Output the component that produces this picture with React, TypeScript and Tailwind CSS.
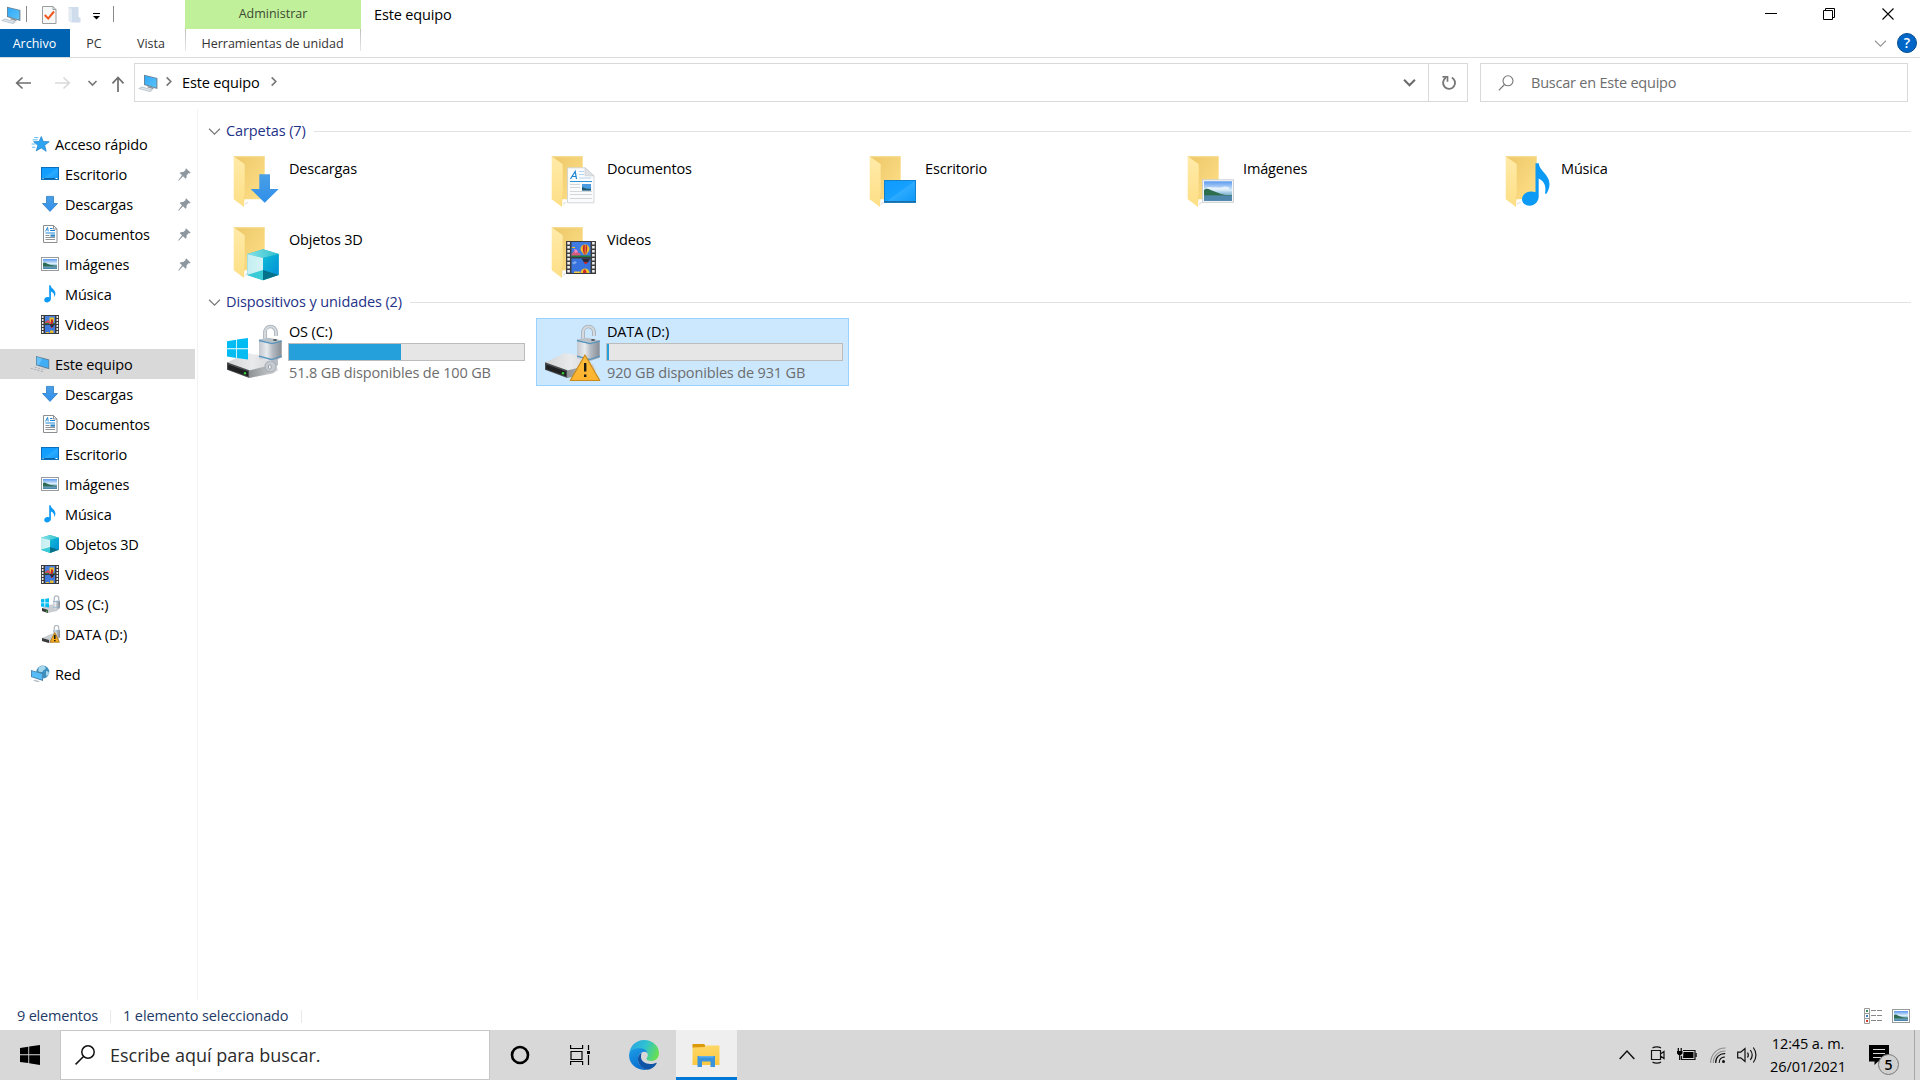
import React from "react";

type IconProps = { className?: string };

const Defs = () => (
  <svg width="0" height="0" className="absolute">
    <defs>
      <linearGradient id="screen" x1="0" y1="0" x2="1" y2="1">
        <stop offset="0" stopColor="#2fa9fb" />
        <stop offset="1" stopColor="#5cc3f7" />
      </linearGradient>
      <linearGradient id="desk" x1="0" y1="0" x2="1" y2="1">
        <stop offset="0" stopColor="#0c9bff" />
        <stop offset="0.5" stopColor="#16a0ff" />
        <stop offset="0.52" stopColor="#2cabff" />
        <stop offset="1" stopColor="#0a97f9" />
      </linearGradient>
      <linearGradient id="folderBack" x1="0" y1="0" x2="1" y2="1">
        <stop offset="0" stopColor="#ecc767" />
        <stop offset="1" stopColor="#ffe08a" />
      </linearGradient>
      <linearGradient id="folderFront" x1="0" y1="0" x2="0" y2="1">
        <stop offset="0" stopColor="#ffeaa8" />
        <stop offset="1" stopColor="#fddf86" />
      </linearGradient>
      <linearGradient id="arrow" x1="0" y1="0" x2="0" y2="1">
        <stop offset="0" stopColor="#4a9fe6" />
        <stop offset="1" stopColor="#2f8fea" />
      </linearGradient>
      <linearGradient id="sky" x1="0" y1="0" x2="0" y2="1">
        <stop offset="0" stopColor="#5a98ee" />
        <stop offset="0.45" stopColor="#d9ecfb" />
        <stop offset="0.6" stopColor="#9cc6df" />
        <stop offset="1" stopColor="#3f7ea6" />
      </linearGradient>
      <linearGradient id="cubeLeft" x1="0" y1="0" x2="1" y2="0">
        <stop offset="0" stopColor="#c3eef2" />
        <stop offset="1" stopColor="#d6f4f5" />
      </linearGradient>
      <linearGradient id="cubeRight" x1="0" y1="0" x2="1" y2="1">
        <stop offset="0" stopColor="#12bcd6" />
        <stop offset="1" stopColor="#0090d8" />
      </linearGradient>
      <linearGradient id="cubeTop" x1="0" y1="0" x2="1" y2="0">
        <stop offset="0" stopColor="#86e3e8" />
        <stop offset="1" stopColor="#2fbfcd" />
      </linearGradient>
      <linearGradient id="metal" x1="0" y1="0" x2="1" y2="0">
        <stop offset="0" stopColor="#c3c8cf" />
        <stop offset="0.35" stopColor="#e8ebee" />
        <stop offset="0.6" stopColor="#b4bac2" />
        <stop offset="1" stopColor="#878d95" />
      </linearGradient>
      <linearGradient id="driveTop" x1="0" y1="0" x2="1" y2="0">
        <stop offset="0" stopColor="#d2d4d6" />
        <stop offset="0.5" stopColor="#e9eaec" />
        <stop offset="1" stopColor="#cfd1d4" />
      </linearGradient>
      <linearGradient id="driveSide" x1="0" y1="0" x2="1" y2="0">
        <stop offset="0" stopColor="#8f9295" />
        <stop offset="1" stopColor="#d5d7d9" />
      </linearGradient>
      <linearGradient id="warn" x1="0" y1="0" x2="0" y2="1">
        <stop offset="0" stopColor="#fbbd3c" />
        <stop offset="1" stopColor="#fdb32f" />
      </linearGradient>
      <linearGradient id="edgeTop" x1="0" y1="0.3" x2="1" y2="0.6">
        <stop offset="0" stopColor="#2aa5e4" />
        <stop offset="0.5" stopColor="#2fc3d0" />
        <stop offset="1" stopColor="#6be04c" />
      </linearGradient>
      <linearGradient id="edgeLeft" x1="0" y1="0" x2="0.4" y2="1">
        <stop offset="0" stopColor="#1c9de6" />
        <stop offset="1" stopColor="#0a6fd0" />
      </linearGradient>
      <linearGradient id="taskFolder" x1="0" y1="0" x2="0" y2="1">
        <stop offset="0" stopColor="#ffd766" />
        <stop offset="1" stopColor="#fdc840" />
      </linearGradient>
    </defs>
  </svg>
);

const PcIcon = ({ className }: IconProps) => (
  <svg width="20" height="18" viewBox="0 0 20 18" className={className}>
    <path d="M6 .8 19.4 4v11L6 11z" fill="#6d7f8c" />
    <path d="M6.8 1.7 18.4 4.500v9.200L6.800 10.300z" fill="url(#screen)" />
    <path d="M9.500 12l6 1.600v1.600l-6-1.600z" fill="#8d989f" />
    <path d="M0 14.700 3.800 12.600l11.400 3.200-3.200 2.200z" fill="#b9c4cc" />
    <path d="M1.800 14.600l2.200-1.100 9.200 2.500-1.500 1.100z" fill="#dfe6eb" />
  </svg>
);

const SidePcIcon = () => (
  <svg width="20" height="18" viewBox="0 0 20 18">
    <path d="M6 1 19.2 4.6v9.6L6 10.3z" fill="#5d7d96" />
    <path d="M6.8 2 18.4 5.2v7.7L6.8 9.5z" fill="#40adf5" />
    <path d="M6.8 2 12 3.5l-3 6.6-2.2-.6z" fill="#69c2fa" />
    <path d="M.5 13.2l13 3.6M4.5 12l8 2.4 3-.6" stroke="#aab2b8" strokeWidth="1" fill="none" strokeDasharray="2.5 1" />
  </svg>
);

const StarIcon = () => (
  <svg width="19" height="18" viewBox="0 0 19 18">
    <path
      d="M10.3 1.5l2 5 5.9.2-4.5 3.6 1.5 6-5-3.4-5 3 1.7-5.6L2.6 6.7l5.5-.2z"
      fill="#2ea3f2"
      stroke="#1c82c9"
      strokeWidth=".7"
    />
    <path d="M3.3 2.6h4M1.6 4.8h5M.6 9h4M1 12.2h3.4" stroke="#5fbdf5" strokeWidth="1" />
  </svg>
);

const DesktopIcon = () => (
  <svg width="18" height="18" viewBox="0 0 18 18">
    <rect x=".5" y="2.5" width="17" height="12" fill="url(#desk)" stroke="#0a6fbd" />
    <path d="M1 13.5h16" stroke="#0b62a6" />
    <path d="M1.5 13.5h1M14.5 13.5h2" stroke="#fff" />
  </svg>
);

const DownIcon = () => (
  <svg width="18" height="18" viewBox="0 0 18 18">
    <path d="M5.5 1.4h7v7.1h4L9 16.4 1.5 8.5h4z" fill="url(#arrow)" stroke="#2b7cc4" strokeWidth=".8" />
  </svg>
);

const DocIcon = () => (
  <svg width="18" height="18" viewBox="0 0 18 18">
    <path d="M2.5.5h10l3.5 3.5v13.5H2.5z" fill="#fff" stroke="#8b8f92" />
    <path d="M12.5.5V4H16" fill="none" stroke="#8b8f92" />
    <path d="M4.5 6.4 6.6 2.4l.6 4M9 3.5h2.5M9 5.5h5" stroke="#1d86d8" fill="none" />
    <path d="M4.5 8h9.5" stroke="#1d86d8" />
    <path d="M4.5 10.5h4M4.5 12.5h9.5M4.5 14.5h9.5" stroke="#8f9498" />
    <rect x="9.5" y="9.5" width="4.5" height="2.2" fill="#2f86c4" />
  </svg>
);

const PictureIcon = () => (
  <svg width="18" height="18" viewBox="0 0 18 18">
    <rect x=".5" y="2.5" width="17" height="13" fill="#fff" stroke="#989b9e" />
    <rect x="2" y="4" width="14" height="10" fill="url(#sky)" />
    <path d="M2 8.2c2-1.5 3 .2 4.500.6s2.500 1.500 9.500 2v.8H2z" fill="#2d6b54" />
  </svg>
);

const MusicIcon = () => (
  <svg width="18" height="18" viewBox="0 0 18 18">
    <path
      d="M8.200.3h1.400c.3 3.400 4.800 4.100 4.800 8.200 0 1.500-.5 2.600-1.200 3.700.3-2.600-.3-4.600-3.300-5.800v7.700c0 1.900-1.700 3.300-3.700 3.300-1.800 0-3-.9-3-2.300 0-1.700 1.700-3 3.500-3 .6 0 1.100.1 1.500.3z"
      fill="#0c9af5"
    />
  </svg>
);

const FilmArt = () => (
  <>
    <rect width="30" height="33" fill="#3c3c3e" />
    <rect x="5.500" y="1" width="19" height="15" fill="#3f7be0" />
    <path d="M5.500 13l3-3 3 1 3 2v2h-9z" fill="#d65a7e" />
    <path d="M8 8l3 1 1 2-3 1z" fill="#f28ac0" />
    <path d="M5.500 14.500h19V16h-19z" fill="#1f7a3d" />
    <path d="M14.500 8a4.500 4.500 0 0 1 9 0c0 2-2 3.500-3 5.500h-3c-1-2-3-3.500-3-5.500z" fill="#f0c32c" />
    <path d="M17 4.500c-.6 3 0 6 1 9h.8V3.800zM21 4.500c.6 3 0 6-1 9h-.5V3.800z" fill="#c8262c" />
    <path d="M6 6h3v1H6z" fill="#f0c32c" />
    <rect x="5.500" y="17.500" width="19" height="14.500" fill="#3873dd" />
    <path d="M15.500 17.500h9l-2.500 4h-4z" fill="#2e2b36" />
    <path d="M18 21h3.500l-.8 2h-2z" fill="#c8262c" />
    <path d="M6 22l3-2 2 1.500-3 2z" fill="#7fa9ee" />
    <path d="M14.500 32c0-6 9-6 9 0z" fill="#f0c32c" />
    <path d="M17 32c0-5 3-5 3.500 0z" fill="#c8262c" />
    <path d="M8 32v-1.500h6V32z" fill="#efc644" />
    <path d="M2.600 1v32M27.400 1v32" stroke="#f1f1f1" strokeWidth="2.600" strokeDasharray="2.400 1.600" />
  </>
);

const VideoIcon = () => (
  <svg width="18" height="19" viewBox="0 0 18 19">
    <rect width="18" height="19" fill="#3a3a3c" />
    <rect x="4" y="1" width="10" height="8" fill="#4a82dd" />
    <path d="M4 7l3-2 3 2v2H4z" fill="#cf4d63" />
    <path d="M8.500 2.500h4.500v3.500l-1 1.500H9.500l-1-1.500z" fill="#edbf2c" />
    <path d="M10 4.500h2V9h-2z" fill="#c22d2a" />
    <path d="M4 8h4v1H4zM12 8h2v1h-2z" fill="#2c7d3c" />
    <rect x="4" y="10" width="10" height="8" fill="#3f78dc" />
    <path d="M9 10h4l-1 2h-2z" fill="#2e2b36" />
    <path d="M10 12h1.500v1H10z" fill="#c8262c" />
    <path d="M9 15.500h3.500V18H9zM5 17h3v1H5z" fill="#e9bd31" />
    <path d="M1.700 1v18M16.300 1v18" stroke="#ececec" strokeWidth="1.600" strokeDasharray="2 1" />
  </svg>
);

const CubeArt = () => (
  <>
    <path d="M0 4.700 15.700 0l15.700 4.700v21L15.700 31 0 25.700z" fill="#27b7c8" />
    <path d="M0 4.700 15.700 0l15.700 4.700-15.700 4z" fill="url(#cubeTop)" />
    <path d="M0 4.700l15.700 4v13.600L0 25.700z" fill="url(#cubeLeft)" />
    <path d="M31.400 4.700l-15.700 4v13.600l15.700 3.400z" fill="url(#cubeRight)" />
    <path d="M0 25.700l15.700-5V31z" fill="#3bcbd6" />
    <path d="M31.400 25.700l-15.700-5V31z" fill="#03718a" />
  </>
);

const CubeIcon = () => (
  <svg width="18" height="18" viewBox="0 0 31.4 31">
    <CubeArt />
  </svg>
);

const DriveArt = () => (
  <>
    <path d="M2 42.500 22 33l22 4 9 13-5 3.500-23.500 4.500z" fill="url(#driveTop)" />
    <path d="M24.300 50.500 50 44l3 6-5 3-23.700 5z" fill="url(#driveSide)" />
    <path d="M2 42.300l22.300 8V58L2 49.800z" fill="#4a4d50" />
    <path d="M3.200 44.500l19.800 7v4.800L3.200 49.200z" fill="#1e2021" />
    <circle cx="20" cy="53.300" r="1.200" fill="#35d23a" />
  </>
);

const LockArt = () => (
  <>
    <path d="M40 20v-7.500a5.500 6 0 0 1 11 0V16" fill="none" stroke="#a4abb3" strokeWidth="3.600" />
    <path d="M40 20v-7.500a5.500 6 0 0 1 11 0V16" fill="none" stroke="#d5dade" strokeWidth="2" />
    <path d="M34 19.500l9-1.700 13.700 2.700v17L46 41.500l-12-3z" fill="url(#metal)" />
    <path d="M34 19.500l9-1.700 13.700 2.700L47 23z" fill="#b9c1c9" />
    <ellipse cx="50" cy="20" rx="2" ry="1" fill="#4e545a" />
    <path d="M34 20.500l13 3.200 9.700-2.500M34 36.200l12.500 3.300L56.700 36" fill="none" stroke="#5794bd" strokeWidth="1.300" />
  </>
);

const WinLogo = () => (
  <path
    d="M2 21.200l9.200-1.500v8.600H2zM12 19.500 23 18v10.300H12zM2 29.200h9.200V38L2 36.500zM12 29.200h11V39.500l-11-1.600z"
    fill="#00bcf2"
  />
);

const KeyArt = () => (
  <>
    <path d="M46 39h7v6l-5 3z" fill="#b8bec4" />
    <circle cx="45.500" cy="46.500" r="5.500" fill="#c5cad0" stroke="#989fa7" strokeWidth=".8" />
    <ellipse cx="44.800" cy="47" rx="1.400" ry="2.200" fill="#f3f5f6" stroke="#8b929a" strokeWidth=".8" />
  </>
);

const WarnArt = () => (
  <>
    <path d="M42 35 56.800 60.500H27.300z" fill="url(#warn)" stroke="#c98a1b" strokeWidth="1.200" strokeLinejoin="round" />
    <path d="M42.200 43v8.500M42.200 54.500V57" stroke="#1d1a12" strokeWidth="2.400" />
  </>
);

const DriveIcon = ({ kind, className }: IconProps & { kind: "os" | "data" }) => (
  <svg width="60" height="64" viewBox="0 0 60 64" className={className}>
    <DriveArt />
    {kind === "os" && <WinLogo />}
    {kind === "os" && <KeyArt />}
    <LockArt />
    {kind === "data" && <WarnArt />}
  </svg>
);

const SmallOsIcon = () => (
  <svg width="20" height="18" viewBox="0 0 20 18">
    <path d="M2 13l6-3 9-1 3 4-3 3-9 2-6-2z" fill="#c9ccd0" />
    <path d="M2 13l6 2v3l-6-2z" fill="#37393b" />
    <path d="M6 15.800h1.500v1H6z" fill="#3bdc3f" />
    <path d="M14.300 6V3a2.200 2.200 0 0 1 4.400 0v2" fill="none" stroke="#b3bac0" strokeWidth="1.300" />
    <path d="M13 5.500h7v7.500l-3 1-4-1z" fill="url(#metal)" />
    <path d="M13 6.500h7M13 12.300h7" stroke="#8ab0c9" strokeWidth=".8" />
    <path d="M1 4.300l3.400-.5v3.700H1zM5.300 3.700 9 3.200v4.300H5.300zM1 8.300h3.400V12L1 11.500zM5.300 8.300H9v4.200l-3.700-.5z" fill="#00bcf2" />
  </svg>
);

const SmallDataIcon = () => (
  <svg width="20" height="18" viewBox="0 0 20 18">
    <path d="M2 13l9-4 8-1v8l-10 2-7-2z" fill="#c9ccd0" />
    <path d="M2 13l7 2v3l-7-2z" fill="#37393b" />
    <path d="M14.300 5V2.600a2.200 2.200 0 0 1 4.400 0v2" fill="none" stroke="#b3bac0" strokeWidth="1.300" />
    <path d="M13 4.800h7v8h-7z" fill="url(#metal)" />
    <path d="M13 6h7" stroke="#8ab0c9" strokeWidth=".8" />
    <path d="M14.800 7.500 19.400 17.200H10z" fill="#f9ac1d" stroke="#a86f10" strokeWidth=".8" strokeLinejoin="round" />
    <path d="M14.800 10v4M14.800 15v1.300" stroke="#1d1a12" strokeWidth="1.600" />
  </svg>
);

const NetworkIcon = () => (
  <svg width="20" height="18" viewBox="0 0 20 18">
    <circle cx="12.800" cy="7" r="6.500" fill="#3d8fbe" />
    <path d="M8.500 3c2-2.500 6-2.500 7-.5s-2 2-2.500 3.500-3 1-4.500.5zM16 6c2 0 3 1 3 2.500s-2 3-3 2z" fill="#a7d8ee" />
    <path d="M1 5l12 3.500V16L1 12z" fill="#4a7ea3" />
    <path d="M1.800 6l10.400 3.100v5.700L1.800 11.400z" fill="#55bcf8" />
    <path d="M5 14.700l5 1.600-2 1-5-1.600z" fill="#b9c3ca" />
  </svg>
);

const PinIcon = () => (
  <svg width="13" height="13" viewBox="0 0 13 13" className="mr-[4px]">
    <path d="M8 .3 12.700 4.800l-1.300.6-.7-.3-2.200 2.300c.3 1.400 0 2.500-.9 3.400L5 8.200.8 12.700.2 12.300 4 7.200 1.600 5c1-1 2.300-1.200 3.600-.9L7.700 2 7.400 1.200z" fill="#8d979f" />
  </svg>
);

const Chevron = ({ size = 12, color = "#666", width = 1.3, dir = "down" }: { size?: number; color?: string; width?: number; dir?: "down" | "right" | "up" }) => {
  const d = { down: "M1 3.500 6 8.500 11 3.500", right: "M4 1.500 8.500 6 4 10.500", up: "M.5 9 6 3 11.500 9" }[dir];
  return (
    <svg width={size} height={size} viewBox="0 0 12 12" className="shrink-0">
      <path d={d} fill="none" stroke={color} strokeWidth={width} />
    </svg>
  );
};

const FolderIcon = ({ children }: { children: React.ReactNode }) => (
  <svg width="60" height="62" viewBox="0 0 60 62" className="shrink-0">
    <path d="M19 56l5-4h-3z" fill="#e6e6e6" />
    <path d="M8.700 6.300h31v43h-21z" fill="url(#folderBack)" />
    <path d="M8.700 6.300h31v1h-30z" fill="#f7dd93" />
    <path d="M8.700 6.300l11 8v28l-.7 14.700-10.300-7.700z" fill="url(#folderFront)" />
    <path d="M19.700 41v8.300H19l-.300 7.500z" fill="#f0ce73" />
    {children}
  </svg>
);

const overlays: Record<string, React.ReactNode> = {
  Descargas: <path d="M34.300 24.300H45V39h8.700l-14 13.700-14-13.700h8.600z" fill="url(#arrow)" />,
  Documentos: (
    <g>
      <path d="M24.500 17.800H42l9 8v27H24.500z" fill="#fafbfc" stroke="#cfd3d6" strokeWidth=".9" />
      <path d="M42 17.800v8h9z" fill="#dfe3e6" stroke="#c3c8cc" strokeWidth=".6" />
      <path d="M27.500 29l4.700-7.500L33.500 29M29 26.500h4" stroke="#1b84d2" strokeWidth="1.200" fill="none" />
      <path d="M36 21.500h5M36 24.500h5M36 28h12" stroke="#b5d3ea" />
      <path d="M27 31.500h22" stroke="#2f93d8" />
      <path d="M27 34.500h10M27 37.500h10M27 41.500h22M27 44.500h22M27 48.500h22" stroke="#d3d7da" />
      <rect x="39" y="34" width="9" height="6.500" fill="#4a9be0" />
      <path d="M39 37l4 1.500 5 .5v1.500h-9z" fill="#1e5a70" />
    </g>
  ),
  Escritorio: (
    <g>
      <rect x="23" y="30" width="32" height="22.700" fill="url(#desk)" />
      <rect x="23.500" y="30.500" width="31" height="21.700" fill="none" stroke="#1181ce" />
      <path d="M23 51.800h32" stroke="#1a6ea8" strokeWidth="1.600" />
    </g>
  ),
  Imágenes: (
    <g>
      <rect x="23.500" y="29.800" width="31" height="22.500" fill="#f6f7f8" stroke="#cdd0d3" />
      <rect x="25" y="31.300" width="28" height="19.500" fill="url(#sky)" />
      <path d="M26 39c4-4 6-1 9-1.500s5 .5 7 0 5-2 8 0v2H26z" fill="#eff6fb" opacity=".8" />
      <path d="M25 40c3-2.500 5-.5 8 .5s6 2.500 9 3.500 6 1 11 1v.7H25z" fill="#2f6d4f" />
      <path d="M25 45.700h28v5H25z" fill="#4f86ab" />
    </g>
  ),
  Música: (
    <path
      d="M38.500 13.300h3.200c.7 8 10.800 11 10.800 21 0 3.600-1.200 6.700-3.300 9.700l-1.200-.6c1.300-7-.5-12-6.300-14.800V46.500c0 5-4 9.200-9 9.200-4.500 0-7.700-2.700-7.700-6.500 0-4.500 4.300-7.700 9-7.700 1.700 0 3.300.3 4.500.8z"
      fill="#0c9af5"
    />
  ),
  "Objetos 3D": (
    <g transform="translate(22.300 28.300)">
      <CubeArt />
    </g>
  ),
  Videos: (
    <g transform="translate(23 20)">
      <FilmArt />
    </g>
  ),
};

const folders = ["Descargas", "Documentos", "Escritorio", "Imágenes", "Música", "Objetos 3D", "Videos"];

const icons: Record<string, React.FC> = {
  Escritorio: DesktopIcon,
  Descargas: DownIcon,
  Documentos: DocIcon,
  Imágenes: PictureIcon,
  Música: MusicIcon,
  Videos: VideoIcon,
  "Objetos 3D": CubeIcon,
  "OS (C:)": SmallOsIcon,
  "DATA (D:)": SmallDataIcon,
};

const quickAccess = [
  { name: "Escritorio", pinned: true },
  { name: "Descargas", pinned: true },
  { name: "Documentos", pinned: true },
  { name: "Imágenes", pinned: true },
  { name: "Música" },
  { name: "Videos" },
];

const thisPc = [
  "Descargas",
  "Documentos",
  "Escritorio",
  "Imágenes",
  "Música",
  "Objetos 3D",
  "Videos",
  "OS (C:)",
  "DATA (D:)",
];

const drives = [
  { name: "OS (C:)", kind: "os" as const, info: "51.8 GB disponibles de 100 GB", fill: 112, selected: false },
  { name: "DATA (D:)", kind: "data" as const, info: "920 GB disponibles de 931 GB", fill: 2, selected: true },
];

const TreeItem = ({ name, pinned }: { name: string; pinned?: boolean }) => {
  const Icon = icons[name];
  return (
    <div className="flex h-[30px] items-center pl-[40px]">
      <div className="flex w-[20px] shrink-0 justify-center">
        <Icon />
      </div>
      <span className="ml-[5px] flex-1 pt-[2px]">{name}</span>
      {pinned && <PinIcon />}
    </div>
  );
};

const TreeRoot = ({ name, icon, active }: { name: string; icon: React.ReactNode; active?: boolean }) => (
  <div className={`flex h-[30px] items-center pl-[30px] ${active ? "bg-[#d9d9d9]" : ""}`}>
    <div className="flex w-[20px] shrink-0 justify-center">{icon}</div>
    <span className="ml-[5px] pt-[2px]">{name}</span>
  </div>
);

const TitleBar = () => (
  <div className="flex h-[29px] shrink-0">
    <div className="flex w-[185px] items-start pt-[6px] pl-px">
      <PcIcon />
      <div className="ml-[5px] h-[16px] w-px bg-[#8a8a8a]" />
      <svg width="15" height="18" viewBox="0 0 15 18" className="ml-[15px]">
        <path d="M.5.500h10.500l3 3v14H.5z" fill="#f6f7f7" stroke="#9b9ea1" />
        <path d="M11 .5v3h3" fill="none" stroke="#9b9ea1" />
        <path d="M2.800 9l3.400 3.600L12 5.500" fill="none" stroke="#f0551c" strokeWidth="2" />
      </svg>
      <svg width="13" height="18" viewBox="0 0 13 18" className="ml-[11px]">
        <path d="M.5 1h10v10l2 1v4.500h-9z" fill="#cfdcec" />
        <path d="M.5 1 4 3v14l-3.500-2z" fill="#e2eaf4" />
      </svg>
      <svg width="7" height="7" viewBox="0 0 7 7" className="mt-[7px] ml-[12px]">
        <path d="M0 .5h7" stroke="#000" />
        <path d="M0 3h7L3.500 6.500z" fill="#000" />
      </svg>
      <div className="ml-[13px] h-[16px] w-px bg-[#8a8a8a]" />
    </div>
    <div className="flex w-[176px] items-center justify-center bg-[#c1f09b] pb-[2px] text-[12.5px] tracking-normal text-[#3c4a33]">
      Administrar
    </div>
    <div className="flex flex-1 items-center pl-[13px] text-black">Este equipo</div>
    <svg width="150" height="29" viewBox="0 0 150 29" className="shrink-0">
      <path d="M0 13.500h12" stroke="#000" />
      <path d="M58.500 10.500h9v9h-9zM60.500 10v-1.500h9v9H68" fill="none" stroke="#000" />
      <path d="M117.500 8.500l11 11M128.500 8.500l-11 11" stroke="#000" strokeWidth="1.100" />
    </svg>
    <div className="w-[5px]" />
  </div>
);

const RibbonTabs = () => (
  <div className="flex h-[29px] shrink-0 border-b border-[#dadbdc] text-[12.500px] tracking-normal text-[#333]">
    <div className="flex w-[70px] items-center justify-center bg-[#0063b1] pt-px pr-px text-white">Archivo</div>
    <div className="flex w-[48px] items-center justify-center pt-px">PC</div>
    <div className="flex w-[66px] items-center justify-center pt-px">Vista</div>
    <div className="ml-px flex w-[176px]">
      <div className="h-[22px] w-px bg-linear-to-b from-[#bdbdbd] to-[#e8e8e8]" />
      <div className="flex flex-1 items-center justify-center pt-px pr-px whitespace-nowrap">Herramientas de unidad</div>
      <div className="h-[22px] w-px bg-linear-to-b from-[#bdbdbd] to-[#e8e8e8]" />
    </div>
    <div className="flex flex-1 items-center justify-end gap-[10px] pr-[3px]">
      <Chevron size={13} color="#999" width={1.1} />
      <div className="flex h-[20px] w-[20px] items-center justify-center rounded-full border border-[#0a4d8c] bg-[#0067c9] text-[14px] font-semibold text-white">
        ?
      </div>
    </div>
  </div>
);

const AddressBar = () => (
  <div className="flex h-[48px] shrink-0 pt-[5px]">
    <div className="flex h-[39px] w-[133px] shrink-0 items-center pl-[15px]">
      <svg width="112" height="18" viewBox="0 0 112 18">
        <path d="M16 9H2M7.500 3.500 1.700 9l5.800 5.500" fill="none" stroke="#6f6f6f" strokeWidth="1.700" />
        <path d="M40 9h14M48.500 3.500 54.300 9l-5.800 5.500" fill="none" stroke="#dadada" strokeWidth="1.700" />
        <path d="M73.500 7l4 4 4-4" fill="none" stroke="#777" strokeWidth="1.700" />
        <path d="M103 18V4M97.500 9.300 103 3.500l5.500 5.800" fill="none" stroke="#6f6f6f" strokeWidth="1.700" />
      </svg>
    </div>
    <div className="ml-px flex h-[39px] w-[1334px] shrink-0 border border-[#d9d9d9]">
      <div className="flex flex-1 items-center pl-[3px]">
        <PcIcon />
        <div className="ml-[5px] mb-[2px]">
          <Chevron size={11} color="#777" width={1.800} dir="right" />
        </div>
        <span className="ml-[8px] w-[86px] text-black">Este equipo</span>
        <div className="mb-[2px]">
          <Chevron size={11} color="#777" width={1.800} dir="right" />
        </div>
      </div>
      <div className="flex w-[36px] items-center justify-center pr-px">
        <Chevron size={13} color="#6b6b6b" width={1.900} />
      </div>
      <div className="flex w-[39px] items-center justify-center border-l border-[#d9d9d9] pl-[2px]">
        <svg width="16" height="16" viewBox="0 0 16 16">
          <path d="M10.800 2.500a6 6 0 1 1-6 .3" fill="none" stroke="#777" strokeWidth="1.900" />
          <path d="M1.500 1.800h5v5" fill="none" stroke="#777" strokeWidth="1.700" />
        </svg>
      </div>
    </div>
    <div className="ml-[12px] flex h-[39px] w-[428px] shrink-0 items-center border border-[#d9d9d9] pl-[17px] tracking-[-0.220px] text-[#6d6d6d]">
      <svg width="16" height="16" viewBox="0 0 16 16">
        <circle cx="10" cy="5.800" r="5" fill="none" stroke="#777" strokeWidth="1.100" />
        <path d="M6.500 9.500.8 15.300" stroke="#777" strokeWidth="1.200" />
      </svg>
      <span className="ml-[17px]">Buscar en Este equipo</span>
    </div>
  </div>
);

const GroupHeader = ({ label }: { label: string }) => (
  <div className="flex h-[30px] items-center pl-[10px] tracking-[-0.1px] text-[#1e3287]">
    <Chevron size={13} color="#777" width={1.100} />
    <span className="ml-[5px] whitespace-nowrap">{label}</span>
    <div className="mr-[9px] ml-[8px] h-px flex-1 bg-[#e2e2e2]" />
  </div>
);

const StatusBar = () => (
  <div className="flex h-[28px] shrink-0 items-center pl-[17px] tracking-[-0.1px] text-[#1e3a66]">
    <span className="w-[93px] tracking-[-0.2px]">9 elementos</span>
    <div className="h-[13px] w-px bg-[#e9e9e9]" />
    <span className="ml-[12px] w-[178px]">1 elemento seleccionado</span>
    <div className="h-[13px] w-px bg-[#e9e9e9]" />
    <div className="flex flex-1 items-center justify-end gap-[10px] pr-[10px]">
      <svg width="18" height="16" viewBox="0 0 18 16">
        <path d="M.5.500h5v5h-5zM.5 5.500h5v5h-5zM.5 10.500h5v5h-5z" fill="#fff" stroke="#9a9a9a" />
        <path d="M2 2h2v2H2z" fill="#38915f" />
        <path d="M2 7h2v2H2z" fill="#3e7fc9" />
        <path d="M2 12h2v2H2z" fill="#d63a2c" />
        <path d="M7 2.500h5M13 2.500h5M7 7.500h5M13 7.500h5M7 12.500h5M13 12.500h5" stroke="#888" />
      </svg>
      <PictureIcon />
    </div>
  </div>
);

const EdgeIcon = () => (
  <svg width="30" height="30" viewBox="0 0 30 30">
    <path d="M.2 14C1 5.500 7.500 0 15 0c8.500 0 15 6 15 13 0 5-3.500 8-7.500 8-3 0-5-1-5-2.300 0-1 1.300-1.300 1.300-3.700 0-3-3-5.700-7-5.700C6.500 9.300 2 11.500.2 14z" fill="url(#edgeTop)" />
    <path d="M.1 15C.5 11 5 8.300 10.500 8.300c4 0 7.300 2 8 4.700-1.500-1.200-3-1.500-4.500-1-3.500 1-5.500 4-5 8 .5 4.500 4 9 9.500 9.600C9 31.500-.5 24.500.1 15z" fill="url(#edgeLeft)" />
    <path d="M12.500 12.700C9.500 14.500 8.500 17.500 9 20.500c.8 5 5 9 10 9.200 3.500-.7 6.500-2.900 8.500-6 .5-.9-.2-1.200-1-.8-1.500.7-3 1-5 1-5.500 0-9.500-3-9.500-7 0-1.600.1-3 .5-4.200z" fill="#0f55a5" />
  </svg>
);

const Taskbar = () => (
  <div className="flex h-[50px] shrink-0 bg-[#d8d8d8]">
    <div className="flex w-[60px] items-center justify-center">
      <svg width="20" height="20" viewBox="0 0 20 20">
        <path d="M0 3l8.300-1.200v7.500H0zM9.200 1.600 20 0v9.300H9.200zM0 10.300h8.300v7.800L0 17zM9.200 10.300H20V20L9.200 18.300z" fill="#000" />
      </svg>
    </div>
    <div className="flex w-[430px] items-center border border-[#c6c6c6] bg-white pl-[14px] text-[18px] tracking-normal text-[#2b2b2b]">
      <svg width="20" height="20" viewBox="0 0 20 20">
        <circle cx="13" cy="7" r="6.200" fill="none" stroke="#111" strokeWidth="1.500" />
        <path d="M8.500 11.500.6 19.400" stroke="#111" strokeWidth="1.500" />
      </svg>
      <span className="ml-[15px]">Escribe aquí para buscar.</span>
    </div>
    <div className="flex w-[60px] items-center justify-center">
      <svg width="20" height="20" viewBox="0 0 20 20">
        <circle cx="10" cy="10" r="8" fill="none" stroke="#000" strokeWidth="2.600" />
      </svg>
    </div>
    <div className="flex w-[60px] items-center justify-center">
      <svg width="20" height="20" viewBox="0 0 20 20">
        <path d="M.6 0v3.500h12V0M1 6.500h11v8H1zM.6 20v-3.500h12V20M18.500 0v5M18.500 10v10" fill="none" stroke="#000" strokeWidth="1.200" />
        <path d="M17 6h3v3h-3z" fill="#000" />
      </svg>
    </div>
    <div className="flex w-[66px] items-center justify-center pl-[2px]">
      <EdgeIcon />
    </div>
    <div className="flex w-[61px] items-center justify-center border-b-[3px] border-[#0078d7] bg-[#efefef] pt-[3px] pr-[2px]">
      <svg width="28" height="23" viewBox="0 0 28 23">
        <path d="M.5 0H12l1.500 1.500L12 4H.5z" fill="#dc9a0a" />
        <path d="M.5 3.500 13 3l1.500-1.500h13V21H.5z" fill="url(#taskFolder)" />
        <path d="M5.500 23V12h17.500v11h-4.500v-5.500h-8.500V23z" fill="#3a94dc" />
        <path d="M7 12h14.500v1.500H7z" fill="#5fb0ec" />
      </svg>
    </div>
    <div className="flex-1" />
    <div className="flex items-center">
      <Chevron size={16} color="#111" width={1.100} dir="up" />
      <svg width="16" height="18" viewBox="0 0 16 18" className="ml-[15px]">
        <path d="M1.500 4.500h9v9h-9zM10.500 8l3.500-2.500v7L10.500 10M2.500 2C4.500.5 9 .5 11 2M2.500 16c2 1.500 6.500 1.500 8.500 0" fill="none" stroke="#111" strokeWidth="1.200" />
      </svg>
      <svg width="20" height="14" viewBox="0 0 20 14" className="ml-[11px]">
        <path d="M6 2.500h12v9H4.500V8" fill="none" stroke="#111" strokeWidth="1.200" />
        <path d="M6.500 4H16.500v6H6z" fill="#000" />
        <path d="M18.500 5h1.200v4h-1.200zM0 3h5.500v2.500L4 7H1.500L0 5.500z" fill="#000" />
        <path d="M1.300 0v3M4.200 0v3M2.700 7v5" stroke="#000" strokeWidth="1.200" />
      </svg>
      <svg width="17" height="17" viewBox="0 0 17 17" className="ml-[13px]">
        <circle cx="13.500" cy="14.500" r="1.500" fill="#111" />
        <path d="M9.300 15.800a5 5 0 0 1 5.500-5.700M5.700 16a8.500 8.500 0 0 1 9.500-9.300" fill="none" stroke="#111" strokeWidth="1.200" />
        <path d="M3.300 16A11.500 11.500 0 0 1 15.500 4M.7 16A14.500 14.500 0 0 1 15.500 1" fill="none" stroke="#8c8c8c" strokeWidth="1.100" />
      </svg>
      <svg width="21" height="18" viewBox="0 0 21 18" className="ml-[10px]">
        <path d="M.7 6.200h3L8 2.500v13L3.700 11.800h-3z" fill="none" stroke="#111" strokeWidth="1.200" />
        <path d="M10.500 6.500c1 1.500 1 3.500 0 5M13.300 4c2.300 3 2.300 7 0 10M16.300 1.500c3.500 4.500 3.500 10.500 0 15" fill="none" stroke="#111" strokeWidth="1.200" />
      </svg>
    </div>
    <div className="ml-[11px] flex w-[78px] flex-col items-center pt-[2px] text-[14.500px] leading-[23px] tracking-[-0.120px] whitespace-nowrap text-black">
      <span>12:45 a. m.</span>
      <span>26/01/2021</span>
    </div>
    <div className="flex w-[67px] pt-[15px] pl-[22px]">
      <div className="relative h-[32px] w-[32px]">
        <svg width="20" height="20" viewBox="0 0 20 20">
          <path d="M0 0h20v16.500H9L5.500 20v-3.500H0z" fill="#000" />
          <path d="M4 4.500h12M4 8.500h12M4 12.500h8" stroke="#d8d8d8" strokeWidth="1.200" />
        </svg>
        <div className="absolute top-[9px] left-[9px] flex h-[21px] w-[21px] items-center justify-center rounded-full border border-[#777] bg-[#d0d0d0] text-[14px] font-semibold text-black">
          5
        </div>
      </div>
    </div>
    <div className="w-[6px] border-l border-[#a5a5a5]" />
  </div>
);

export default function App() {
  return (
    <div className="flex h-[1080px] w-[1920px] flex-col overflow-hidden bg-white font-['Open_Sans',sans-serif] text-[14.500px] leading-[20px] tracking-[-0.160px] text-black">
      <Defs />
      <TitleBar />
      <RibbonTabs />
      <AddressBar />
      <div className="flex min-h-0 flex-1">
        <div className="flex w-[198px] shrink-0 flex-col pt-[3px] pb-[2px]">
          <div className="flex-1 border-r border-[#f3f3f3] pt-[20px]">
            <div className="w-[195px]">
              <TreeRoot name="Acceso rápido" icon={<StarIcon />} />
              {quickAccess.map((item) => (
                <TreeItem key={item.name} {...item} />
              ))}
              <div className="h-[10px]" />
              <TreeRoot name="Este equipo" icon={<SidePcIcon />} active />
              {thisPc.map((name) => (
                <TreeItem key={name} name={name} />
              ))}
              <div className="h-[10px]" />
              <TreeRoot name="Red" icon={<NetworkIcon />} />
            </div>
          </div>
        </div>

        <div className="flex-1 pt-[10px]">
          <GroupHeader label="Carpetas (7)" />
          <div className="grid h-[141px] grid-cols-[repeat(5,318px)] content-start pt-[4px] pl-[27px]">
            {folders.map((name) => (
              <div key={name} className="flex h-[71px]">
                <FolderIcon>{overlays[name]}</FolderIcon>
                <span className="ml-[4px] pt-[9px]">{name}</span>
              </div>
            ))}
          </div>
          <GroupHeader label="Dispositivos y unidades (2)" />
          <div className="mt-px flex gap-[5px] pl-[20px]">
            {drives.map((drive) => (
              <div
                key={drive.name}
                className={`flex h-[68px] w-[313px] border pt-px pl-[6px] ${
                  drive.selected ? "border-[#99d1ff] bg-[#cce8ff]" : "border-transparent"
                }`}
              >
                <DriveIcon kind={drive.kind} className="shrink-0" />
                <div className="ml-[3px]">
                  <div className="h-[23px] pt-[2px] pl-px">{drive.name}</div>
                  <div className="h-[18px] w-[237px] border border-[#bcbcbc] bg-[#e6e6e6]">
                    <div className="h-full bg-[#26a0da]" style={{ width: drive.fill }} />
                  </div>
                  <div className="pt-[2px] pl-px whitespace-nowrap text-[#6d6d6d]">{drive.info}</div>
                </div>
              </div>
            ))}
          </div>
        </div>
      </div>
      <StatusBar />
      <Taskbar />
    </div>
  );
}
